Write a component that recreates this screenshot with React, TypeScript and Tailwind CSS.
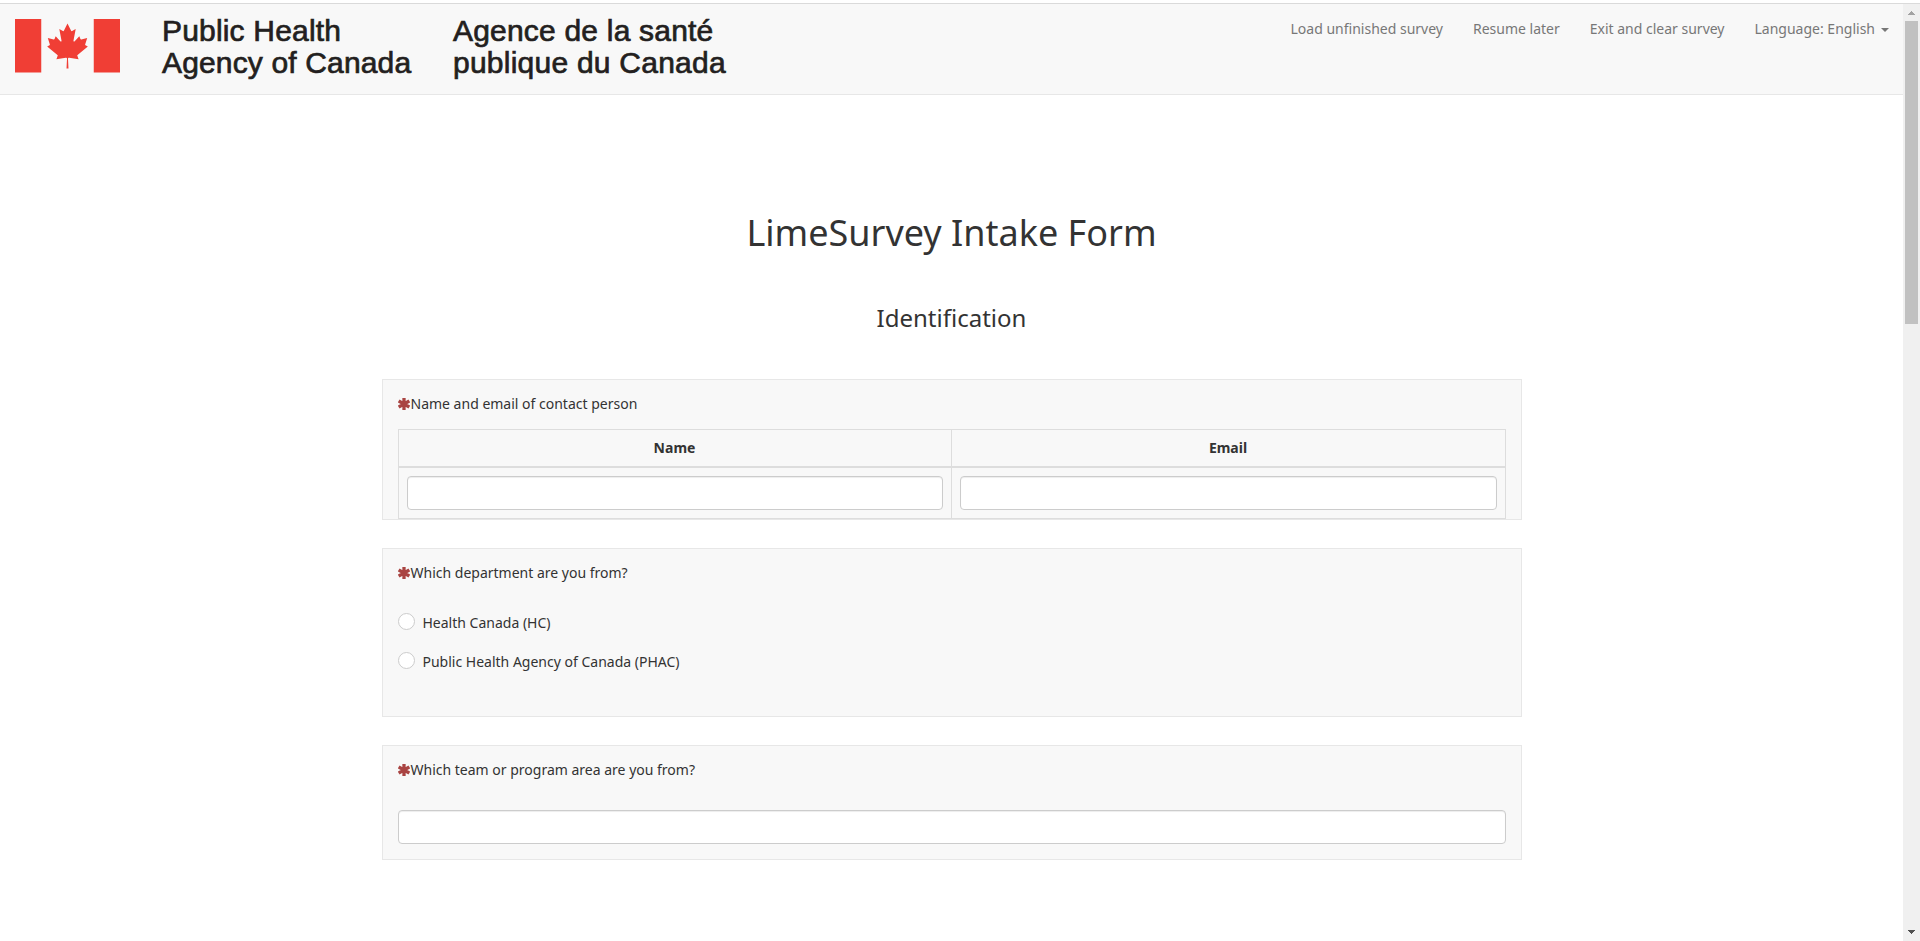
import { ReactNode } from "react";

function Flag() {
  return (
    <svg viewBox="0 0 9600 4800" preserveAspectRatio="none" className="mt-[15px] h-[53.5px] w-[105px] shrink-0" fill="#f03e35">
      <path d="M0 0h2400v4800H0zM7200 0h2400v4800H7200z" />
      <path d="M4710 4430l45-863a95 95 0 0 0-111-98l-859 151 116-320a65 65 0 0 0-20-73l-941-762 212-99a65 65 0 0 0 34-79l-186-572 542 115a65 65 0 0 0 73-38l105-247 423 454a65 65 0 0 0 111-57l-204-1052 327 189a65 65 0 0 0 91-27l332-652 332 652a65 65 0 0 0 91 27l327-189-204 1052a65 65 0 0 0 111 57l423-454 105 247a65 65 0 0 0 73 38l542-115-186 572a65 65 0 0 0 34 79l212 99-941 762a65 65 0 0 0-20 73l116 320-859-151a95 95 0 0 0-111 98l45 863z" />
    </svg>
  );
}

function Asterisk() {
  return (
    <svg viewBox="0 0 12 12" className="mt-1 mr-px h-3 w-3 shrink-0" stroke="#a94442" strokeWidth="3.3">
      <path d="M6 0v12M.7 2.9l10.6 6.2M.7 9.1l10.6-6.2" />
    </svg>
  );
}

function Question({ label, className, children }: { label: string; className: string; children: ReactNode }) {
  return (
    <section className={`border border-[#e7e7e7] bg-[#f8f8f8] px-[15px] pt-[14px] ${className}`}>
      <div className="flex h-5">
        <Asterisk />
        <span>{label}</span>
      </div>
      {children}
    </section>
  );
}

function TextInput() {
  return (
    <input
      type="text"
      className="block h-[34px] w-full rounded-[4px] border border-[#ccc] bg-white px-3 shadow-[inset_0_1px_1px_rgba(0,0,0,0.075)] outline-none"
    />
  );
}

function Radio({ label }: { label: string }) {
  return (
    <label className="flex h-5 gap-2">
      <span className="h-[17px] w-[17px] shrink-0 rounded-full border border-[#ccc] bg-white" />
      <span>{label}</span>
    </label>
  );
}

function Scrollbar() {
  return (
    <div className="flex w-[17px] shrink-0 flex-col items-center bg-[#f0f0f0]">
      <svg viewBox="0 0 17 17" className="h-[17px] w-[17px] shrink-0" fill="#a3a3a3" shapeRendering="crispEdges">
        <path d="M5 11h7L8.5 7z" />
      </svg>
      <div className="h-[303px] w-[13px] bg-[#c1c1c1]" />
      <svg viewBox="0 0 17 17" className="mt-auto h-[17px] w-[17px] shrink-0" fill="#505050" shapeRendering="crispEdges">
        <path d="M5 6h7L8.5 10z" />
      </svg>
    </div>
  );
}

export default function App() {
  return (
    <div className="flex h-[941px] w-[1920px] flex-col overflow-hidden bg-white pt-[3px] font-['Noto_Sans',sans-serif] text-[14px] leading-5 text-[#333]">
      <div className="h-px shrink-0 bg-[#dadada]" />
      <div className="flex min-h-0 flex-1">
        <div className="flex min-w-0 flex-1 flex-col">
          <header className="flex h-[91px] shrink-0 border-b border-[#e7e7e7] bg-[#f8f8f8] pl-[15px]">
            <Flag />
            <div className="ml-[42px] flex pt-[11px] font-['Liberation_Sans',sans-serif] text-[30px] leading-8 whitespace-nowrap text-[#231f20] [-webkit-text-stroke:0.7px_#231f20]">
              <div className="w-[291px]">
                <div className="tracking-[0.18px]">Public Health</div>
                <div className="tracking-[0.15px]">Agency of Canada</div>
              </div>
              <div>
                <div className="tracking-[0.2px]">Agence de la santé</div>
                <div className="tracking-[0.24px]">publique du Canada</div>
              </div>
            </div>
            <nav className="ml-auto flex gap-[30px] pt-[15px] pr-[14px] text-[#777]">
              <span>Load unfinished survey</span>
              <span>Resume later</span>
              <span>Exit and clear survey</span>
              <span className="flex">
                Language: English
                <span className="mt-[9px] ml-[6px] h-0 w-0 border-x-4 border-t-4 border-x-transparent border-t-[#777]" />
              </span>
            </nav>
          </header>
          <main className="mx-auto w-[1140px] pt-[118px]">
            <h1 className="text-center text-[36px] leading-10">LimeSurvey Intake Form</h1>
            <h2 className="mt-[52px] text-center text-[24px] leading-[26px]">Identification</h2>
            <Question label="Name and email of contact person" className="mt-12 h-[141px]">
              <div className="mt-[15px] border border-[#ddd]">
                <div className="grid grid-cols-[553px_1fr] border-b-2 border-[#ddd] text-center font-bold">
                  <div className="border-r border-[#ddd] py-2">Name</div>
                  <div className="py-2">Email</div>
                </div>
                <div className="grid grid-cols-[553px_1fr]">
                  <div className="border-r border-[#ddd] p-2">
                    <TextInput />
                  </div>
                  <div className="p-2">
                    <TextInput />
                  </div>
                </div>
              </div>
            </Question>
            <Question label="Which department are you from?" className="mt-7 h-[169px]">
              <div className="mt-[30px] flex flex-col gap-[19px]">
                <Radio label="Health Canada (HC)" />
                <Radio label="Public Health Agency of Canada (PHAC)" />
              </div>
            </Question>
            <Question label="Which team or program area are you from?" className="mt-7 h-[115px]">
              <div className="mt-[30px]">
                <TextInput />
              </div>
            </Question>
          </main>
        </div>
        <Scrollbar />
      </div>
    </div>
  );
}
